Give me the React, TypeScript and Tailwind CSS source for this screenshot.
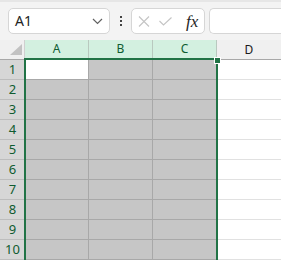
import React from "react";

const cols = ["A", "B", "C", "D"];
const rows = [1, 2, 3, 4, 5, 6, 7, 8, 9, 10];

const App = () => {
  return (
    <div
      className="relative w-[281px] h-[260px] overflow-hidden bg-white"
      style={{ fontFamily: '"Segoe UI", "Noto Sans", "Open Sans", sans-serif' }}
    >
      {/* Formula bar */}
      <div className="h-[40px] bg-[#f3f3f3] border-t-2 border-[#e6e6e6] flex items-center">
        {/* Name box */}
        <div className="ml-[8px] w-[102px] h-[26px] bg-white border border-[#d6d6d6] rounded-[5px] flex items-center justify-between pl-[6px] pr-[6px]">
          <span className="text-[14px] text-[#242424] leading-none">A1</span>
          <svg width="11" height="7" viewBox="0 0 11 7" fill="none">
            <path d="M1 1 L5.5 5.5 L10 1" stroke="#616161" strokeWidth="1.2" />
          </svg>
        </div>

        {/* Dots */}
        <div className="w-[21px] flex flex-col items-center gap-[2px]">
          <span className="w-[2px] h-[2px] bg-[#424242]"></span>
          <span className="w-[2px] h-[2px] bg-[#424242]"></span>
          <span className="w-[2px] h-[2px] bg-[#424242]"></span>
        </div>

        {/* Cancel / Enter / fx */}
        <div className="w-[74px] h-[26px] bg-white border border-[#d6d6d6] rounded-[5px] flex items-center pl-[6px]">
          <svg width="12" height="11" viewBox="0 0 12 11" fill="none">
            <path d="M1 0.5 L11 10.5 M11 0.5 L1 10.5" stroke="#c4c4c4" strokeWidth="1.1" />
          </svg>
          <svg className="ml-[9px]" width="13" height="9" viewBox="0 0 13 9" fill="none">
            <path d="M0.5 4 L4.5 8 L12.5 0.5" stroke="#c4c4c4" strokeWidth="1.1" />
          </svg>
          <span
            className="ml-[14px] text-[17px] italic text-[#242424] leading-none"
            style={{ fontFamily: '"Liberation Serif", "DejaVu Serif", serif' }}
          >
            fx
          </span>
        </div>

        {/* Formula input */}
        <div className="ml-[4px] flex-1 h-[26px] bg-white border border-r-0 border-[#d6d6d6] rounded-l-[5px]"></div>
      </div>

      {/* Column headers */}
      <div className="flex h-[20px]">
        <div className="w-[25px] h-full bg-[#f0f0f0] border-b border-[#a8a8a8] border-r border-r-[#d0d0d0] flex items-end justify-end pr-[2px] pb-[4px]">
          <svg width="12" height="11" viewBox="0 0 12 11">
            <path d="M12 0 L12 11 L0 11 Z" fill="#c2c2c2" />
          </svg>
        </div>
        {cols.map((c) => {
          const sel = c !== "D";
          return (
            <div
              key={c}
              className={
                sel
                  ? "w-[64px] h-full bg-[#d3f0e0] border-r border-[#b9c9bf] border-b-2 border-b-[#217346] flex items-center justify-center text-[12px] text-[#0f5c30]"
                  : "w-[64px] h-full bg-[#f0f0f0] border-b border-[#a8a8a8] flex items-center justify-center text-[12px] text-[#1a1a1a]"
              }
            >
              {c}
            </div>
          );
        })}
      </div>

      {/* Rows */}
      {rows.map((r) => (
        <div key={r} className="flex h-[20px]">
          <div className="w-[25px] h-full bg-[#d6d6d6] border-b border-[#bdbdbd] flex items-center justify-center text-[13px] text-[#0f5c30]">
            {r}
          </div>
          {cols.map((c) => {
            const active = r === 1 && c === "A";
            const sel = c !== "D";
            return (
              <div
                key={c}
                className={
                  active
                    ? "w-[64px] h-full bg-white border-r border-b border-[#a8a8a8]"
                    : sel
                    ? "w-[64px] h-full bg-[#c6c6c6] border-r border-b border-[#a8a8a8]"
                    : "w-[64px] h-full bg-white border-b border-[#e1e1e1]"
                }
              ></div>
            );
          })}
        </div>
      ))}

      {/* Selection outline */}
      <div className="absolute left-[24px] top-[58px] w-[194px] h-[210px] border-2 border-[#217346] pointer-events-none"></div>
      <div className="absolute left-[214px] top-[57px] w-[7px] h-[7px] bg-[#217346] border border-white"></div>
    </div>
  );
};

export default App;
